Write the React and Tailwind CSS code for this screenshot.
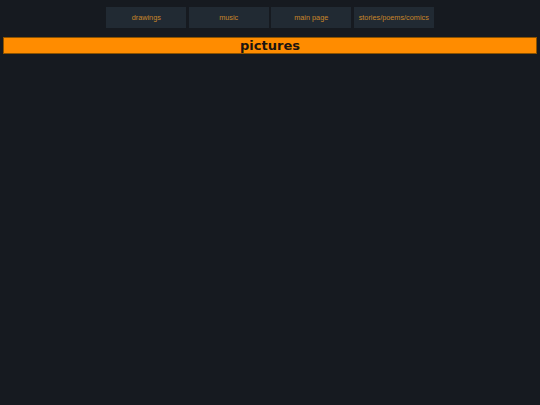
export default function App() {
  const links = ['drawings', 'music', 'main page', 'stories/poems/comics'];

  return (
    <div className="min-h-[405px] bg-[#161a20] pt-[7px] px-[3px]">
      <div className="flex justify-center gap-[2.5px]">
        {links.map((l) => (
          <div
            key={l}
            className="w-[80px] h-[21px] pt-[2px] bg-[#212a33] flex items-center justify-center text-[7.3px] text-[#c8862a] whitespace-nowrap"
            style={{ fontFamily: '"Liberation Sans", Arial, sans-serif' }}
          >
            {l}
          </div>
        ))}
      </div>
      <div
        className="mt-[9px] h-[17px] bg-[#ff8c00] border border-[#8a5200] flex items-center justify-center text-[13px] font-bold text-[#1a1410]"
        style={{ fontFamily: '"DejaVu Sans", Verdana, sans-serif' }}
      >
        pictures
      </div>
    </div>
  );
}
